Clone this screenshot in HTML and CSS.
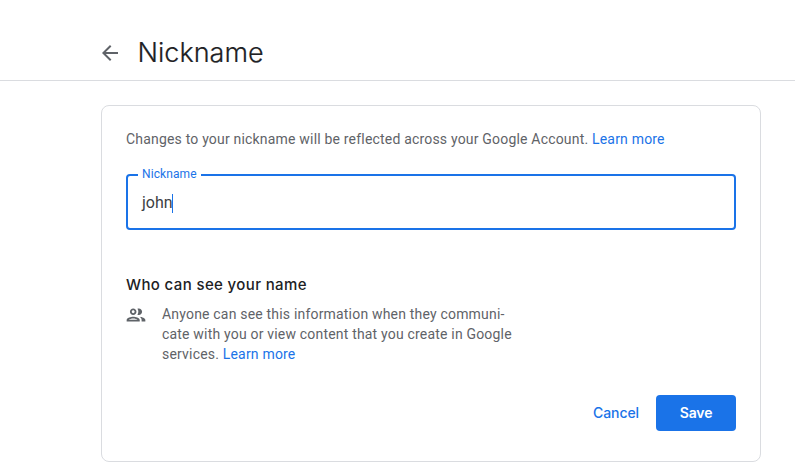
FILE: index.html
```html
<!DOCTYPE html>
<html lang="en">
<head>
<meta charset="utf-8">
<title>Nickname</title>
<link rel="stylesheet" href="styles.css">
</head>
<body>
<header class="header">
  <svg class="back" viewBox="0 0 24 24" width="24" height="24"><path d="M20 11H7.830l5.590-5.590L12 4l-8 8 8 8 1.410-1.410L7.830 13H20z"/></svg>
  <h1 class="title">Nickname</h1>
</header>
<main class="card">
  <p class="intro">Changes to your nickname will be reflected across your Google Account. <a class="link">Learn more</a></p>
  <div class="field">
    <span class="label">Nickname</span>
    <span class="value">john</span><span class="caret"></span>
  </div>
  <h2 class="subtitle">Who can see your name</h2>
  <div class="info">
    <svg class="people" viewBox="1.300 1.300 21.400 21.400" width="20" height="20"><path d="M9 13.750c-2.340 0-7 1.170-7 3.500V19h14v-1.750c0-2.330-4.660-3.500-7-3.500zM4.340 17c.84-.58 2.870-1.250 4.660-1.250s3.820.67 4.660 1.250H4.340zM9 12c1.930 0 3.500-1.570 3.500-3.500S10.930 5 9 5 5.500 6.570 5.500 8.500 7.070 12 9 12zm0-5c.83 0 1.500.67 1.500 1.500S9.830 10 9 10s-1.500-.67-1.500-1.500S8.170 7 9 7zm7.040 6.810c1.160.84 1.960 1.960 1.960 3.440V19h4v-1.750c0-2.020-3.500-3.170-5.960-3.440zM15 12c1.930 0 3.500-1.570 3.500-3.500S16.930 5 15 5c-.54 0-1.040.13-1.500.35.63.89 1 1.980 1 3.150s-.37 2.260-1 3.150c.46.220.96.350 1.500.350z"/></svg>
    <p class="text">Anyone can see this information when they communi-<br>cate with you or view content that you create in Google<br>services. <a class="link">Learn more</a></p>
  </div>
  <div class="actions">
    <button class="cancel">Cancel</button>
    <button class="save">Save</button>
  </div>
</main>
</body>
</html>
```
FILE: styles.css
```css
* { box-sizing: border-box; }
body { margin: 0; background: #fff; color: #5f6368; font: 14px/20px Roboto, sans-serif; letter-spacing: .19px; overflow: hidden; }
h1, h2, p { margin: 0; font-weight: 400; }
.header { height: 81px; border-bottom: 1px solid #dadce0; padding: 25px 0 0 97.5px; display: flex; align-items: center; gap: 16px; }
.back { fill: #5f6368; }
.title { font: 300 27px/36px Inter, sans-serif; color: #202124; letter-spacing: 0; -webkit-text-stroke: .2px #202124; }
.card { width: 660px; height: 357px; margin: 24px 0 0 101px; border: 1px solid #dadce0; border-radius: 8px; padding: 23px 24px 24px; }
.link { color: #1a73e8; }
.field { position: relative; height: 56px; margin-top: 25px; border: 2px solid #1a73e8; border-radius: 4px; padding: 2px 0 0 14px; display: flex; align-items: center; }
.label { position: absolute; left: 10px; top: -12px; padding: 0 4px; background: #fff; color: #1a73e8; font-size: 12px; letter-spacing: .1px; }
.value { font-size: 16px; color: #3c4043; letter-spacing: 0; }
.caret { width: 1px; height: 19px; margin-left: -1px; background: #1a73e8; }
.subtitle { margin-top: 43px; font: 450 15px/24px Inter, sans-serif; color: #202124; letter-spacing: .37px; }
.info { display: flex; gap: 16px; margin-top: 7px; }
.people { fill: #5f6368; margin-top: 1px; }
.actions { display: flex; justify-content: flex-end; margin-top: 31px; }
button { border: 0; height: 36px; border-radius: 4px; font: 500 14px Inter, sans-serif; letter-spacing: -.1px; padding: 0 0 1px; }
.cancel { background: none; color: #1a73e8; width: 80px; }
.save { background: #1a73e8; color: #fff; width: 80px; font-weight: 600; }
```
